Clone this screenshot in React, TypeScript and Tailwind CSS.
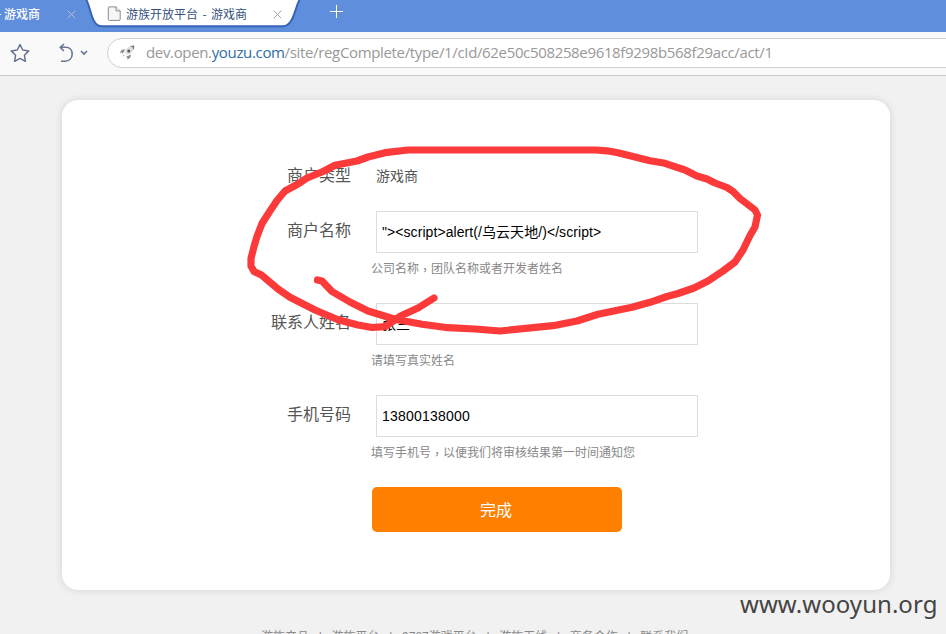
import type { ReactNode } from 'react';

const cjk = "font-['Liberation_Sans','Noto_Sans_CJK_SC',sans-serif]";

function CloseIcon({ className }: { className: string }) {
  return (
    <svg width="9" height="9" viewBox="0 0 9 9" className={className} stroke="currentColor" fill="none">
      <path d="M.7.7l7.6 7.6M8.3.7L.7 8.3" />
    </svg>
  );
}

function TabBar() {
  return (
    <div className="relative flex h-8 bg-[#5f8edc] text-[12px] font-['Noto_Sans_CJK_SC',sans-serif]">
      <svg width="230" height="32" viewBox="0 0 230 32" className="absolute left-[80px] top-0">
        <path d="M5 -2C11 4 10 26.300 22 26.300H203C214 26.300 215 6 220.500 -2Z" fill="#fff" stroke="#3764b5" strokeWidth="2" />
      </svg>
      <div className="relative flex h-7 w-[107px] items-center text-white">
        <span className="w-[67px] whitespace-nowrap pl-1 font-medium">游戏商</span>
        <CloseIcon className="text-[#b7bfce]" />
        <i className="absolute left-0 top-[14px] h-px w-px bg-white" />
      </div>
      <div className="relative flex h-7 w-[222px] items-center text-[#35507c]">
        <svg width="14" height="16" viewBox="0 0 14 16" className="mr-[5px]" fill="#f6f6f6" stroke="#8a8a8a">
          <path d="M2 .9H9L13.200 4.900V13.400Q13.200 14.400 12 14.400H2.500Q1.300 14.400 1.300 13.400V1.600Q1.300 .9 2 .9Z" />
          <path d="M9 .9V4.900H13.200" />
        </svg>
        <span className="w-[147px] whitespace-nowrap [word-spacing:1.700px]">游族开放平台 - 游戏商</span>
        <CloseIcon className="text-[#a3a3a3]" />
      </div>
      <svg width="14" height="14" viewBox="0 0 14 14" className="mt-[5px]" stroke="#fff" fill="none">
        <path d="M7.500 0V13M1 6.500H14" />
      </svg>
    </div>
  );
}

function AddressBar() {
  return (
    <div className="flex h-11 items-center overflow-hidden border-b border-[#cbcbcb] bg-[#f9f9f9] pb-[2px] text-[#67748f]">
      <svg width="20" height="20" viewBox="0 0 20 20" className="ml-[10px]" fill="none" stroke="currentColor" strokeWidth="1.500" strokeLinejoin="round">
        <path d="M10 1.500L12.700 7L18.800 7.900L14.400 12.200L15.400 18.300L10 15.400L4.600 18.300L5.600 12.200L1.200 7.900L7.300 7Z" />
      </svg>
      <svg width="16" height="20" viewBox="0 0 16 20" className="ml-[28px]" fill="none" stroke="currentColor" strokeWidth="1.600">
        <path d="M6 1L2.300 4.200L5.800 8M2.500 4.300H7.500C11.500 4.300 14.200 7 14.200 11C14.200 15.500 11 18.200 7 18.200H3" />
      </svg>
      <svg width="8" height="6" viewBox="0 0 8 6" className="ml-[6px]" fill="none" stroke="currentColor" strokeWidth="1.600">
        <path d="M1 1L4 4L7 1" />
      </svg>
      <div className="-mr-5 ml-[19px] flex h-[30px] flex-1 items-center rounded-full border border-[#d0d0d0] bg-white pl-[12px]">
        <svg width="15" height="15" viewBox="0 0 15 15" className="mr-[11px]" fill="#8d8d8d">
          <path d="M14 .8C10 1 7 2.500 5.500 5C4.500 8 7 10.300 9.500 9.300C12.500 7.700 14 5 14 .8Z" fill="#dedede" />
          <path d="M9.500 1L14.300 .5L13.800 5.500L12.600 2.300Z" fill="#777" />
          <circle cx="8.800" cy="6" r="1.500" fill="#555" />
          <path d="M5 4.200L1.500 5Q0 6.500.3 8.800L1.700 7.300L2.700 8.800L4 6.500Z" />
          <path d="M11 9.600L10.400 12.600Q9.300 14.200 6.700 14.200L7.600 13L6.200 11.600L8.500 10.700Z" />
          <path d="M3.500 9.500L2.500 11.500L4.500 10.700Z" fill="#b5b5b5" />
        </svg>
        <span className="whitespace-nowrap pb-[2px] text-[15px] leading-[20px] tracking-[-0.345px] text-[#999] font-['Open_Sans',sans-serif]">
          dev.open.<span className="text-[#2f6da3]">youzu.com</span>/site/regComplete/type/1/cId/62e50c508258e9618f9298b568f29acc/act/1
        </span>
      </div>
    </div>
  );
}

function Comma() {
  return <span className="align-[-2px] leading-none font-['Noto_Sans_CJK_TC',sans-serif]">，</span>;
}

function Field({ label, hint, children }: { label: string; hint: ReactNode; children: ReactNode }) {
  return (
    <div className="flex h-[92px]">
      <div className="w-[289px] pt-2 text-right text-[16px] leading-6 text-[#555]">{label}</div>
      <div className="ml-5">
        <div className="ml-[5px] flex h-[42px] w-[322px] items-center border border-[#ddd] pl-[5px] text-[14px] text-black">
          {children}
        </div>
        <div className="mt-[6px] h-5 text-[12px] leading-5 text-[#888]">{hint}</div>
      </div>
    </div>
  );
}

// Freehand marker circling the merchant name field.
function MarkerStroke() {
  return (
    <svg width="946" height="634" viewBox="0 0 946 634" className="pointer-events-none absolute left-0 top-0" fill="none" stroke="#fc3a3a" strokeWidth="7.200" strokeLinecap="round" strokeLinejoin="round">
      <path d="M317.500 280L322 281L332 291.500L350 302L368 311L395 319.300L422 324.300L448 327.700L475 329L500 331L553 325.700L577 321L598 314.300L632 307.300L650 302.300L667 296.500L678 293.500L694 288L708 281L723 271L735 262L743 250L750 235.500L755 227L757.500 215L755 210L740 198.500L733 191.500L727 187.500L715 183L707 179L697 176L685 170L665 163.300L650 160.700L635 157L618 152.700L607 150.800L596 150H408L385 152.700L368 157L357 161L335 165.300L323 171.500L307 178L298 184L285 191L277 200.500L270 211L262 223.500L257 236.500L254 246.500L251 258.500L251 266L254 271.500L261.500 275L278 289L290 297.300L315 310L338 319.700L358 325L372 327.500L385 326.700L401 315.700L418 308L434 298" />
    </svg>
  );
}

export default function App() {
  return (
    <div className={`relative h-[634px] w-[946px] overflow-hidden bg-[#f1f1f1] ${cjk}`}>
      <TabBar />
      <AddressBar />
      <main className="ml-[62px] mt-6 h-[490px] w-[828px] rounded-[16px] bg-white pt-[63px] shadow-[0_0_8px_rgba(0,0,0,0.12)]">
        <div className="flex h-12 text-[#555]">
          <div className="w-[289px] pt-px text-right text-[16px] leading-6">商户类型</div>
          <div className="ml-[25px] text-[14px] leading-[26px]">游戏商</div>
        </div>
        <Field label="商户名称" hint={<>公司名称<Comma />团队名称或者开发者姓名</>}>
          <span className="tracking-[0.07px]">"&gt;&lt;script&gt;alert(/乌云天地/)&lt;/script&gt;</span>
        </Field>
        <Field label="联系人姓名" hint="请填写真实姓名">张三</Field>
        <Field label="手机号码" hint={<>填写手机号<Comma />以便我们将审核结果第一时间通知您</>}>
          <span className="tracking-[0.21px]">13800138000</span>
        </Field>
        <button className="ml-[310px] block h-[45px] w-[250px] rounded-[5px] bg-[#ff8000] pr-[2px] pt-[2px] text-[16px] text-white">完成</button>
      </main>
      <footer className="ml-[261px] mt-[37px] flex whitespace-nowrap text-[12px] leading-5 text-[#888]">
        {['游族产品', '游族平台', '9787游戏平台', '游族无线', '商务合作', '联系我们'].map((item, i) => (
          <span key={item} className="flex">
            {i > 0 && <span className="w-[22.500px] text-center">|</span>}
            {item}
          </span>
        ))}
      </footer>
      <MarkerStroke />
      <div className="absolute left-[740px] top-[587px] whitespace-nowrap text-[24px] leading-[34px] tracking-[0.050px] text-[#444] font-['Noto_Sans',sans-serif]">www.wooyun.org</div>
    </div>
  );
}
